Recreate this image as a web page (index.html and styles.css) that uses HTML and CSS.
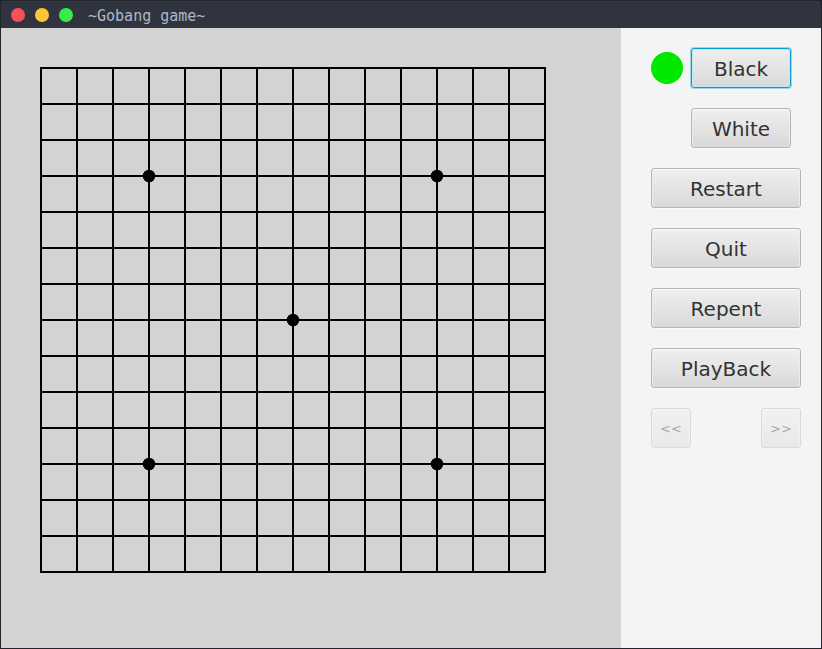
FILE: index.html
```html
<!DOCTYPE html>
<html lang="en">
<head>
<meta charset="utf-8">
<title>~Gobang game~</title>
<link rel="stylesheet" href="styles.css">
</head>
<body>
<div class="window">
  <header class="titlebar">
    <div class="lights">
      <button class="light close" aria-label="Close"></button>
      <button class="light minimize" aria-label="Minimize"></button>
      <button class="light maximize" aria-label="Maximize"></button>
    </div>
    <h1 class="title">~Gobang game~</h1>
  </header>
  <div class="content">
    <main class="board">
      <svg class="grid" width="506" height="506" viewBox="0 0 506 506" role="img" aria-label="Game board">
        <path fill="none" stroke="#000" stroke-width="2" d="M0 1H506M0 37H506M0 73H506M0 109H506M0 145H506M0 181H506M0 217H506M0 253H506M0 289H506M0 325H506M0 361H506M0 397H506M0 433H506M0 469H506M0 505H506M1 0V506M37 0V506M73 0V506M109 0V506M145 0V506M181 0V506M217 0V506M253 0V506M289 0V506M325 0V506M361 0V506M397 0V506M433 0V506M469 0V506M505 0V506"/>
        <circle cx="109" cy="109" r="6.3"/>
        <circle cx="397" cy="109" r="6.3"/>
        <circle cx="253" cy="253" r="6.3"/>
        <circle cx="109" cy="397" r="6.3"/>
        <circle cx="397" cy="397" r="6.3"/>
      </svg>
    </main>
    <aside class="panel">
      <div class="player">
        <span class="turn"></span>
        <button class="btn side active">Black</button>
      </div>
      <div class="player">
        <button class="btn side">White</button>
      </div>
      <button class="btn">Restart</button>
      <button class="btn">Quit</button>
      <button class="btn">Repent</button>
      <button class="btn">PlayBack</button>
      <div class="steps">
        <button class="btn step" disabled>&lt;&lt;</button>
        <button class="btn step" disabled>&gt;&gt;</button>
      </div>
    </aside>
  </div>
</div>
</body>
</html>
```
FILE: styles.css
```css
* {
  box-sizing: border-box;
}

body {
  margin: 0;
  background: #22232d;
}

.window {
  display: flex;
  flex-direction: column;
  min-height: 100vh;
  border: 1px solid #22232d;
}

.titlebar {
  display: flex;
  align-items: center;
  gap: 15px;
  height: 27px;
  padding: 0 10px;
  border-top: 1px solid #363a45;
  border-radius: 3px 3px 0 0;
  background: #2f343f;
}

.lights {
  display: flex;
  gap: 10px;
}

.light {
  width: 14px;
  height: 14px;
  padding: 0;
  border: 0;
  border-radius: 50%;
}

.close {
  background: #f75057;
}

.minimize {
  background: #fcc536;
}

.maximize {
  background: #39ea49;
}

.title {
  margin: 0;
  padding-top: 2px;
  color: #afb8c6;
  font: 15px/20px "DejaVu Sans Mono", monospace;
}

.content {
  display: flex;
  flex: 1;
}

.board {
  flex: 1;
  padding: 39px;
  background: #d3d3d3;
}

.grid {
  display: block;
}

.panel {
  display: flex;
  flex-direction: column;
  gap: 20px;
  width: 200px;
  padding: 20px 20px 20px 30px;
  background: #f4f4f4;
}

.player {
  display: flex;
  align-items: center;
  justify-content: flex-end;
  gap: 8px;
  padding-right: 10px;
}

.turn {
  width: 32px;
  height: 32px;
  border-radius: 50%;
  background: #00e800;
}

.btn {
  height: 40px;
  padding: 2px 0 0;
  border: 1px solid #b5b5b5;
  border-radius: 3px;
  background: linear-gradient(#efefef, #d9d9d9);
  box-shadow: inset 0 1px #fafafa, inset 1px 0 #ededed, inset -1px 0 #ededed, 0 1px #fafafa;
  color: #333;
  font: 20px/24px "DejaVu Sans", sans-serif;
}

.side {
  width: 100px;
}

.active {
  border-color: #039ed3;
  box-shadow: inset 0 0 0 1px #cfe3ea, 0 0 0 1px #9ad6ec;
}

.steps {
  display: flex;
  justify-content: space-between;
}

.step {
  width: 40px;
  font-size: 13px;
}

.step:disabled {
  opacity: 0.4;
}
```
